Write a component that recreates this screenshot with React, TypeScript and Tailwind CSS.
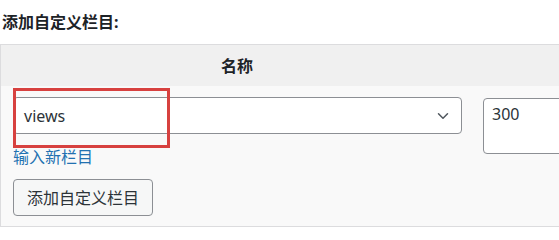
import { ChevronDown } from "lucide-react"

const font = { fontFamily: '"Noto Sans", "Noto Sans CJK SC", sans-serif' }

const App = () => {
  return (
    <div className="w-[559px] h-[231px] overflow-hidden bg-white text-[#1d2327]" style={font}>
      {/* Section title */}
      <div className="pt-[11px] pl-[2px] mb-[11px] text-[16px] leading-[22px] font-bold">添加自定义栏目:</div>

      <div className="w-[760px] border border-[#dcdcde] border-r-0">
        {/* Header row */}
        <div className="flex h-[41px] bg-[#f0f0f0] items-center">
          <div className="w-[472px] text-center text-[16px] font-bold">名称</div>
        </div>

        {/* Body */}
        <div className="flex bg-[#f9f9f9] pt-[11px] pb-[10px]">
          <div className="w-[472px] pl-[12px] pr-[11px]">
            <div className="relative">
              <div className="flex items-center justify-between h-[37px] bg-white border border-[#8c8f94] rounded-[4px] pl-[10px] pr-[9px] text-[16px] text-[#2c3338]">
                <span>views</span>
                <ChevronDown size={18} strokeWidth={2} className="text-[#50575e]" />
              </div>
              {/* Highlight box */}
              <div className="absolute left-0 top-[-9px] w-[157px] h-[60px] border-[3px] border-[#d7413f]" />
            </div>
            <div className="mt-[13px] text-[16px] leading-[20px] text-[#2271b1]">输入新栏目</div>
            <button className="mt-[12px] h-[37px] w-[140px] bg-[#f6f7f7] border border-[#8c8f94] rounded-[4px] text-[16px] text-[#2c3338]">
              添加自定义栏目
            </button>
          </div>
          <div className="pl-[10px] pt-[1px]">
            <div className="w-[200px] h-[56px] bg-white border border-[#8c8f94] rounded-[4px] px-[8px] pt-[4px] text-[16px] leading-[22px] text-[#2c3338]">
              300
            </div>
          </div>
        </div>
      </div>
    </div>
  )
}

export default App
